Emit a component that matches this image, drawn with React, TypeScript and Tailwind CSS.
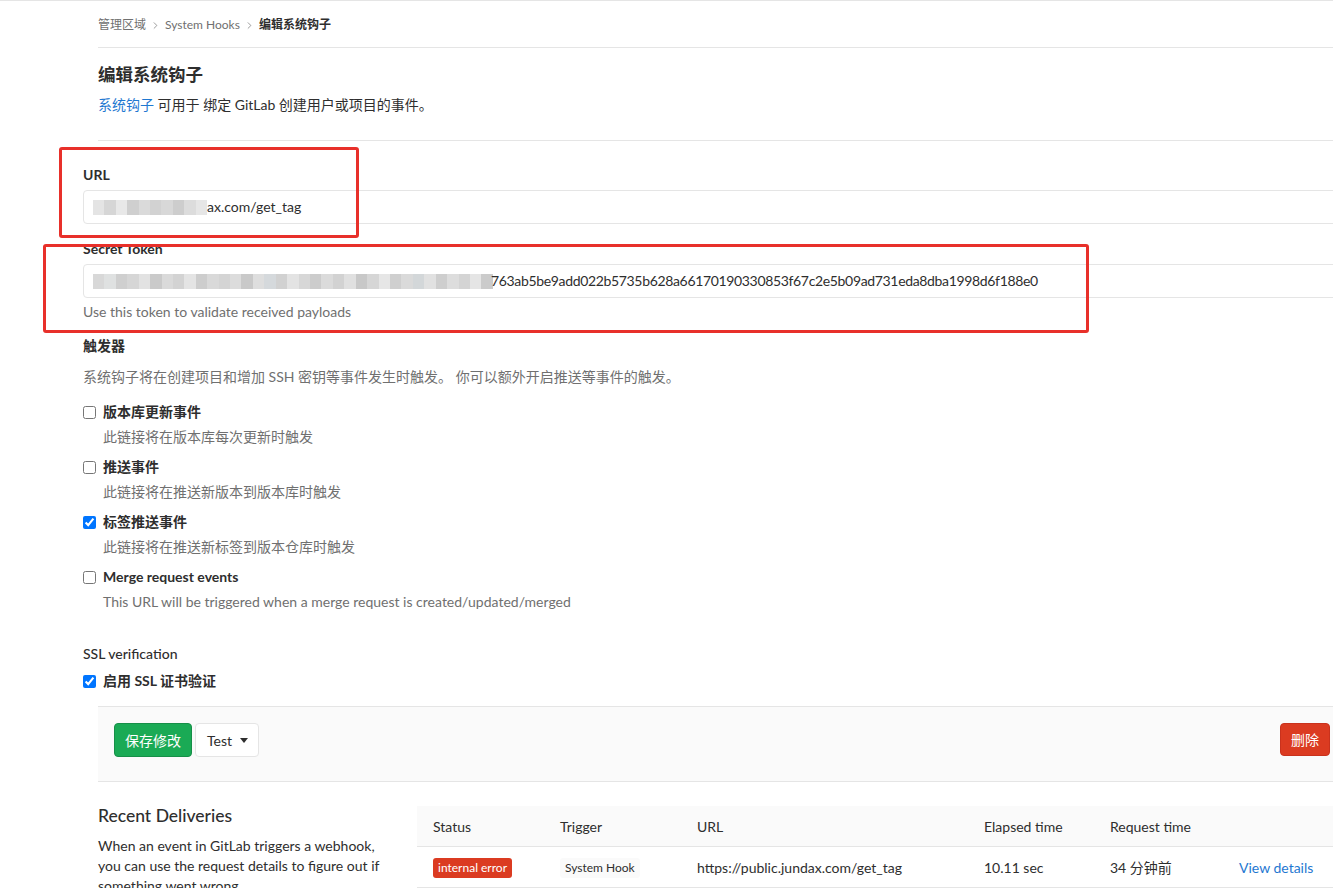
import { ChevronRight } from "lucide-react";

const urlTiles = [
  "bg-[#e4e4e4]",
  "bg-[#d6d6d6]",
  "bg-[#e8e8e8]",
  "bg-[#cfcfcf]",
  "bg-[#dadada]",
  "bg-[#d2d2d2]",
  "bg-[#d8d8d8]",
  "bg-[#cdcdcd]",
  "bg-[#dcdcdc]",
  "bg-[#e6e6e6]",
];

const tokenTiles = [
  "bg-[#d8d8d8]", "bg-[#dfe1e1]", "bg-[#cfcfcf]", "bg-[#d6d6d6]", "bg-[#e2e2e2]",
  "bg-[#cacaca]", "bg-[#dadada]", "bg-[#d3d3d3]", "bg-[#e4e4e4]", "bg-[#cdcdcd]",
  "bg-[#d9d9d9]", "bg-[#d4d4d4]", "bg-[#dcdcdc]", "bg-[#c9c9c9]", "bg-[#dedede]",
  "bg-[#d5d9dc]", "bg-[#d1d1d1]", "bg-[#e3e3e3]", "bg-[#d7d7d7]", "bg-[#cccccc]",
  "bg-[#dbdbdb]", "bg-[#d2d2d2]", "bg-[#e0e0e0]", "bg-[#c8c8c8]", "bg-[#d6d6d6]",
  "bg-[#e6e6e6]", "bg-[#cfcfcf]", "bg-[#dadada]", "bg-[#d3d7d9]", "bg-[#e1e1e1]",
  "bg-[#cecece]", "bg-[#dddddd]", "bg-[#d4d4d4]", "bg-[#e5e5e5]", "bg-[#cbcbcb]",
];

const triggers = [
  { label: "版本库更新事件", help: "此链接将在版本库每次更新时触发", checked: false },
  { label: "推送事件", help: "此链接将在推送新版本到版本库时触发", checked: false },
  { label: "标签推送事件", help: "此链接将在推送新标签到版本仓库时触发", checked: true },
  {
    label: "Merge request events",
    help: "This URL will be triggered when a merge request is created/updated/merged",
    checked: false,
  },
];

function Mosaic({ tiles, width }: { tiles: string[]; width: string }) {
  return (
    <div className={`flex h-[15px] shrink-0 ${width}`}>
      {tiles.map((c, i) => (
        <span key={i} className={`h-full flex-1 ${c}`} />
      ))}
    </div>
  );
}

function Checkbox({ checked }: { checked: boolean }) {
  return (
    <input
      type="checkbox"
      defaultChecked={checked}
      className="m-0 h-[13px] w-[13px] shrink-0 accent-[#0075ff]"
    />
  );
}

export default function App() {
  return (
    <div className="relative h-[888px] w-[1333px] overflow-hidden border-t border-[#e5e5e5] bg-white font-['Lato','Noto_Sans_CJK_SC',sans-serif] text-[14px] text-[#2e2e2e]">
      <div className="pl-[98px]">
        <nav className="flex h-[47px] items-center gap-[4px] border-b border-[#e5e5e5] pt-[2px] text-[12px] text-[#707070]">
          <span>管理区域</span>
          <ChevronRight className="size-[11px]" strokeWidth={1.5} />
          <span>System Hooks</span>
          <ChevronRight className="size-[11px]" strokeWidth={1.5} />
          <span className="font-bold text-[#2e2e2e]">编辑系统钩子</span>
        </nav>

        <div className="border-b border-[#e5e5e5] pb-[25px] pt-[15px]">
          <h3 className="text-[17.5px] font-bold leading-[24px]">编辑系统钩子</h3>
          <p className="mt-[8px] leading-[20px]">
            <a className="text-[#1f78d1]">系统钩子</a> 可用于 绑定 GitLab 创建用户或项目的事件。
          </p>
        </div>

        <form className="-ml-[15px] pt-[24px] leading-[20px]">
          <label className="block font-bold">URL</label>
          <div className="mt-[5px] flex h-[34px] w-[calc(100%+20px)] items-center rounded-[4px] border border-[#e5e5e5] px-[9px]">
            <Mosaic tiles={urlTiles} width="w-[114px]" />
            <span>ax.com/get_tag</span>
          </div>

          <label className="mt-[15px] block font-bold">Secret Token</label>
          <div className="mt-[5px] flex h-[34px] w-[calc(100%+20px)] items-center rounded-[4px] border border-[#e5e5e5] px-[9px]">
            <Mosaic tiles={tokenTiles} width="w-[400px]" />
            <span className="-ml-[2px] tracking-[-0.34px]">
              763ab5be9add022b5735b628a66170190330853f67c2e5b09ad731eda8dba1998d6f188e0
            </span>
          </div>
          <p className="mt-[4px] text-[#707070]">Use this token to validate received payloads</p>

          <div className="mt-[14px] font-bold">触发器</div>
          <p className="mt-[11px] text-[#707070]">
            系统钩子将在创建项目和增加 SSH 密钥等事件发生时触发。 你可以额外开启推送等事件的触发。
          </p>

          <div className="mt-[15px] flex flex-col gap-[10px]">
            {triggers.map((t) => (
              <div key={t.label}>
                <label className="flex items-center gap-[7px] font-bold">
                  <Checkbox checked={t.checked} />
                  {t.label}
                </label>
                <p className="mt-[5px] pl-[20px] text-[#707070]">{t.help}</p>
              </div>
            ))}
          </div>

          <div className="mt-[32px] font-medium">SSL verification</div>
          <label className="mt-[7px] flex items-center gap-[7px] font-bold">
            <Checkbox checked />
            <span>启用 SSL 证书验证</span>
          </label>
        </form>

        <div className="mt-[15px] flex h-[76px] w-[calc(100%+10px)] items-start justify-between border-y border-[#e5e5e5] bg-[#fafafa] pl-[16px] pr-[13px] pt-[16px]">
          <div className="flex gap-[3px]">
            <button
              type="button"
              className="h-[34px] rounded-[4px] border border-[#168f48] bg-[#1aaa55] px-[10px] text-white"
            >
              保存修改
            </button>
            <button
              type="button"
              className="flex h-[34px] items-center gap-[8px] rounded-[4px] border border-[#e5e5e5] bg-white pl-[11px] pr-[10px]"
            >
              Test
              <span className="h-0 w-0 border-x-[4px] border-t-[5px] border-x-transparent border-t-[#2e2e2e]" />
            </button>
          </div>
          <button
            type="button"
            className="h-[33px] rounded-[4px] border border-[#c9321d] bg-[#db3b21] px-[10px] text-white"
          >
            删除
          </button>
        </div>

        <div className="mt-[24px] grid grid-cols-[304px_1fr] gap-[15px]">
          <div>
            <h4 className="-mt-[2px] text-[17.5px] font-medium leading-[24px]">Recent Deliveries</h4>
            <p className="mt-[8px] w-[292px] leading-[20px]">
              When an event in GitLab triggers a webhook, you can use the request details to figure
              out if something went wrong.
            </p>
          </div>
          <div className="w-[calc(100%+20px)]">
            <div className="grid h-[41px] grid-cols-[127px_137px_287px_126px_129px_1fr] items-center border-b border-[#e5e5e5] bg-[#fafafa] pl-[16px]">
              <span>Status</span>
              <span>Trigger</span>
              <span>URL</span>
              <span>Elapsed time</span>
              <span>Request time</span>
              <span />
            </div>
            <div className="grid h-[41px] grid-cols-[127px_137px_287px_126px_129px_1fr] items-center border-b border-[#e5e5e5] pl-[16px]">
              <span>
                <span className="inline-block rounded-[3px] bg-[#db3b21] px-[5px] text-[12px] leading-[20px] text-white">
                  internal error
                </span>
              </span>
              <span>
                <span className="inline-block rounded-[3px] bg-[#fafafa] px-[5px] text-[12px] leading-[20px]">
                  System Hook
                </span>
              </span>
              <span>https://public.jundax.com/get_tag</span>
              <span>10.11 sec</span>
              <span>34 分钟前</span>
              <a className="text-[#1f78d1]">View details</a>
            </div>
          </div>
        </div>
      </div>

      <div className="pointer-events-none absolute left-[59px] top-[146px] h-[91px] w-[300px] rounded-[3px] border-[3px] border-[#e8302a]" />
      <div className="pointer-events-none absolute left-[43px] top-[243px] h-[89px] w-[1046px] rounded-[3px] border-[3px] border-[#e8302a]" />
    </div>
  );
}
